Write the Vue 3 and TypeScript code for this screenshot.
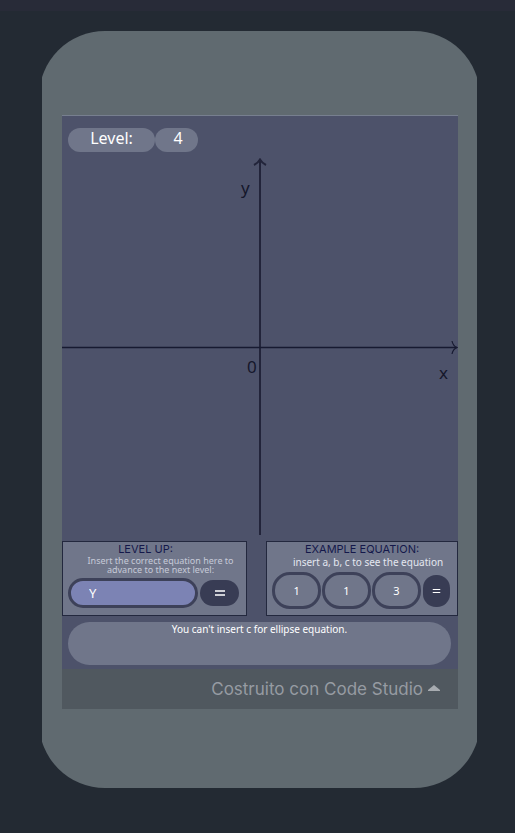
<script setup lang="ts">
import { ref } from 'vue'

const level = ref<number>(4)
const answer = ref<string>('Y')
const coefficients = ref([
  { name: 'a', value: '1' },
  { name: 'b', value: '1' },
  { name: 'c', value: '3' },
])
const message = ref<string>("You can't insert c for ellipse equation.")
</script>

<template>
  <div class="page">
    <header class="topbar"></header>
    <main class="phone">
      <div class="screen">
        <div class="game">
          <div class="level">
            <span class="pill pill-label">Level:</span>
            <output class="pill pill-value">{{ level }}</output>
          </div>

          <svg class="chart" viewBox="0 0 396 378" role="img" aria-label="Coordinate axes">
            <g fill="none" stroke="#22243a">
              <path d="M198 377V2" stroke-width="2" />
              <path d="M192 7Q196 5 198 1.500Q200 5 204 7" stroke-width="2" />
            </g>
            <g fill="none" stroke="#171a31">
              <path d="M0 189.500H395" stroke-width="1.500" />
              <path d="M390 183Q391 188 395 189.500Q391 191 390 196" stroke-width="1.200" />
            </g>
            <text x="179" y="36">y</text>
            <text x="185" y="215">0</text>
            <text x="377" y="221">x</text>
          </svg>

          <div class="panels">
            <form class="panel panel-answer" @submit.prevent>
              <h2>LEVEL UP:</h2>
              <label class="hint small" for="answer">Insert the correct equation here to<br />advance to the next level:</label>
              <div class="fields">
                <input id="answer" v-model="answer" class="answer" type="text" />
                <button type="submit" aria-label="Check equation">
                  <svg viewBox="0 0 12 8" width="12" height="8"><path d="M1 2H11M1 6H11" /></svg>
                </button>
              </div>
            </form>

            <form class="panel panel-example" @submit.prevent>
              <h2>EXAMPLE EQUATION:</h2>
              <p class="hint">insert a, b, c to see the equation</p>
              <div class="fields">
                <input
                  v-for="item in coefficients"
                  :key="item.name"
                  v-model="item.value"
                  class="coefficient"
                  type="text"
                  :aria-label="item.name"
                />
                <button type="submit" aria-label="Show equation">
                  <svg viewBox="0 0 12 8" width="9" height="6"><path d="M1 2H11M1 6H11" /></svg>
                </button>
              </div>
            </form>
          </div>

          <p class="message" role="status">{{ message }}</p>
        </div>
        <footer class="footer">
          <button type="button">
            Costruito con Code Studio
            <svg viewBox="0 0 12 8" width="12" height="8"><path d="M6 0L12 5V6H0V5Z" /></svg>
          </button>
        </footer>
      </div>
    </main>
  </div>
</template>

<style>
body {
  background: #232a33;
}
</style>

<style scoped>
.page {
  box-sizing: border-box;
  min-height: 100vh;
  padding-bottom: 45px;
  background: #232a33;
  font-family: "Noto Sans", sans-serif;
  color: #fff;
}
.page * {
  box-sizing: border-box;
}
.topbar {
  height: 11px;
  background: #282b38;
}
.phone {
  position: relative;
  overflow: hidden;
  isolation: isolate;
  margin: 20px 38px 0 42px;
  padding: 84px 19px 79px 20px;
}
.phone::before {
  content: "";
  position: absolute;
  z-index: -1;
  inset: 0 -3px;
  border-radius: 66px;
  background: #606a70;
}
.screen {
  border-top: 1px solid #777f8f;
}
.game {
  padding-bottom: 4px;
  background: #4d526a;
}
.level {
  display: flex;
  padding: 12px 6px 6px;
}
.pill {
  height: 24px;
  border-radius: 12px;
  background: #70768a;
  font-size: 16px;
  line-height: 21px;
  text-align: center;
}
.pill-label {
  width: 87px;
}
.pill-value {
  width: 43px;
  padding-left: 3px;
}
.chart {
  display: block;
  width: 100%;
}
.chart text {
  font-size: 17px;
  fill: #15172b;
}
.panels {
  display: flex;
  gap: 19px;
  padding-top: 5px;
}
.panel {
  min-width: 0;
  height: 75px;
  border: 1px solid #23283e;
  background: #70768a;
}
.panel-answer {
  flex: 185 1 0;
}
.panel-example {
  flex: 192 1 0;
}
h2,
p {
  margin: 0;
}
h2 {
  font-family: Inter, sans-serif;
  font-size: 11px;
  font-weight: 400;
  line-height: 14px;
  text-align: center;
  white-space: nowrap;
  color: #14184a;
}
.panel-answer h2 {
  padding-right: 18px;
}
.hint {
  display: block;
  padding-left: 12px;
  font-size: 10px;
  line-height: 12px;
  text-align: center;
  white-space: nowrap;
  color: #e4e7f0;
}
.hint.small {
  font-size: 9px;
  line-height: 9px;
  color: #c6cad8;
}
.fields {
  display: flex;
  align-items: center;
}
.panel-answer .fields {
  gap: 2px;
  padding: 4px 7px 0 5px;
}
.panel-example .fields {
  gap: 1px;
  padding: 4px 7px 0 5px;
}
input {
  width: 0;
  min-width: 0;
  margin: 0;
  border: 3px solid #3d4159;
  color: #fff;
  font-family: inherit;
  outline: none;
}
.answer {
  flex: 1;
  height: 30px;
  padding: 0 18px;
  border-radius: 15px;
  background: #7c83b4;
  font-size: 13px;
}
.coefficient {
  flex: 1;
  height: 37px;
  padding: 0;
  border-radius: 18px;
  background: #70768a;
  font-size: 11px;
  text-align: center;
}
button {
  display: flex;
  align-items: center;
  justify-content: center;
  padding: 0;
  border: 0;
  font-family: inherit;
}
.fields button {
  flex: none;
  background: #383c54;
}
.fields button path {
  fill: none;
  stroke: #fff;
  stroke-width: 1.5;
}
.panel-answer button {
  width: 39px;
  height: 26px;
  border-radius: 13px;
}
.panel-example button {
  width: 27px;
  height: 32px;
  margin-left: 1px;
  border-radius: 13px;
}
.message {
  height: 43px;
  margin: 6px 7px 0 6px;
  border-radius: 22px;
  background: #70768a;
  font-size: 10px;
  line-height: 14px;
  text-align: center;
}
.footer {
  display: flex;
  justify-content: flex-end;
  height: 40px;
  padding-right: 18px;
  background: #50585f;
}
.footer button {
  gap: 5px;
  background: none;
  color: #969ba2;
  font-family: Inter, sans-serif;
  font-size: 17px;
  line-height: 20px;
  white-space: nowrap;
}
.footer path {
  fill: #a7abb0;
}
</style>
